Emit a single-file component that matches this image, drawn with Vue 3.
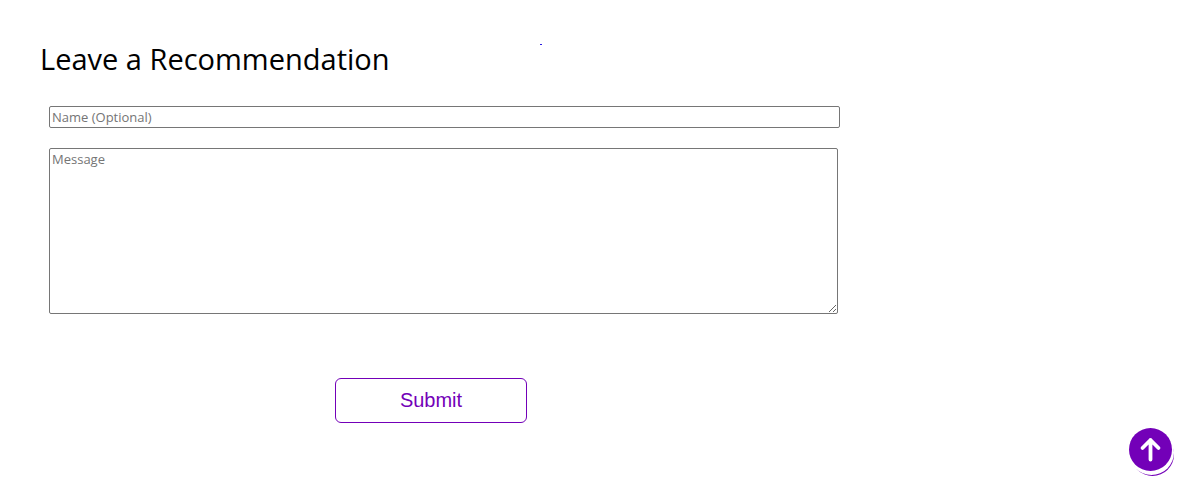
<script setup>
import { ref } from 'vue'

const name = ref('')
const message = ref('')

function toTop() {
  window.scrollTo({ top: 0, behavior: 'smooth' })
}
</script>

<template>
  <main class="page">
    <span class="dot" aria-hidden="true"></span>
    <form class="recommend" @submit.prevent>
      <h1 class="title">Leave a Recommendation</h1>
      <div class="fields">
        <input v-model="name" class="name" type="text" placeholder="Name (Optional)" aria-label="Name (Optional)" />
        <textarea v-model="message" class="message" placeholder="Message" aria-label="Message"></textarea>
      </div>
      <button class="submit" type="submit">Submit</button>
    </form>
    <button class="to-top" type="button" aria-label="Back to top" @click="toTop">
      <svg viewBox="0 0 43 43" aria-hidden="true">
        <path d="M21.5 31.5V12M13.5 20l8-8 8 8" fill="none" stroke="#fff" stroke-width="3.8" stroke-linecap="round" stroke-linejoin="round" />
      </svg>
    </button>
  </main>
</template>

<style>
body {
  margin: 0;
  background: #fff;
}
</style>

<style scoped>
.page {
  position: relative;
  box-sizing: border-box;
  min-height: 100vh;
  padding: 40px;
  font-family: "Trebuchet MS", "Open Sans", "Noto Sans", sans-serif;
}
.recommend {
  display: flex;
  flex-direction: column;
  max-width: 800px;
}
.title {
  margin: 0;
  font-size: 29px;
  font-weight: 400;
  line-height: 38px;
  color: #000;
}
.fields {
  display: flex;
  flex-direction: column;
  gap: 20px;
  margin: 28px 0 0 9px;
}
.name,
.message {
  box-sizing: border-box;
  padding: 2px;
  border: 1px solid #767676;
  border-radius: 2px;
  background: #fff;
  font-family: inherit;
  font-size: 13px;
  line-height: 16px;
}
.name {
  height: 22px;
}
.message {
  height: 166px;
  margin-right: 2px;
  resize: both;
}
.name::placeholder,
.message::placeholder {
  color: #757575;
}
.submit {
  align-self: center;
  width: 192px;
  height: 45px;
  margin: 64px 18px 0 0;
  border: 1px solid #7300b8;
  border-radius: 6px;
  background: #fff;
  color: #7300b8;
  font-family: "Liberation Sans", Arial, sans-serif;
  font-size: 20px;
}
.dot {
  position: absolute;
  top: 44px;
  left: 540px;
  width: 2px;
  height: 1px;
  background: #2a1ae0;
}
.to-top {
  position: fixed;
  right: 14px;
  bottom: 15px;
  width: 43px;
  height: 43px;
  padding: 0;
  border: 0;
  border-radius: 50%;
  background: #7300b8;
  box-shadow: 1px 3px 0 1px #fff, 2px 5px 0 #7300b8;
}
.to-top svg {
  display: block;
  width: 100%;
}
</style>
